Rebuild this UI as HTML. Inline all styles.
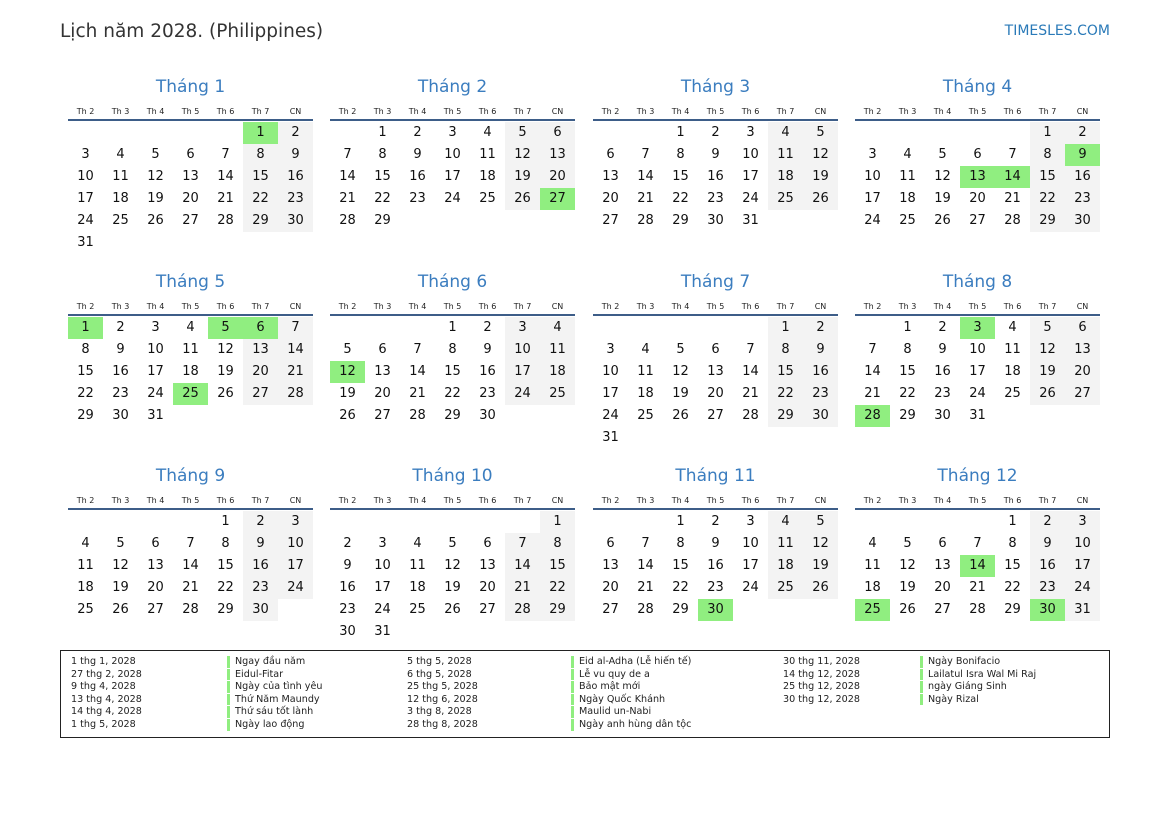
<!DOCTYPE html>
<html><head><meta charset="utf-8"><style>
*{margin:0;padding:0;box-sizing:border-box}
body{width:1169px;height:827px;background:#fff;position:relative;font-family:"DejaVu Sans","Liberation Sans",sans-serif;color:#111;overflow:hidden}
.hd{position:absolute;left:60px;top:21px;font-size:18.5px;color:#333}
.lg{position:absolute;right:59px;top:23px;font-size:14px;color:#2a7ab8}
.m{position:absolute;width:245px}
.t{height:24px;line-height:24px;text-align:center;color:#3b7dbf;font-size:17px}
.h{margin-top:4px;height:18px;display:flex;border-bottom:2px solid #3d5d88}
.h span{width:35px;text-align:center;font-size:8px;line-height:18px;color:#222}
.d{display:flex;flex-wrap:wrap;margin-top:1px}
.d i,.d b,.d s,.d u{width:35px;height:22px;line-height:22px;text-align:center;font-size:13px;font-style:normal;font-weight:normal;text-decoration:none}
.d s{background:#f3f3f3}
.d u{background:#90ee80}
.box{position:absolute;left:60px;top:650px;width:1050px;height:88px;border:1px solid #222}
.c{position:absolute;top:5px;font-size:9.6px;line-height:12.6px;color:#222}
.n div{border-left:3px solid #90ee80;padding-left:5px;margin-bottom:1px;line-height:11.6px}
</style></head><body>
<div class="hd">Lịch năm 2028. (Philippines)</div>
<div class="lg">TIMESLES.COM</div>

<div class="m" style="left:68px;top:75px"><div class="t">Tháng 1</div><div class="h"><span>Th 2</span><span>Th 3</span><span>Th 4</span><span>Th 5</span><span>Th 6</span><span>Th 7</span><span>CN</span></div><div class="d"><i></i><i></i><i></i><i></i><i></i><u>1</u><s>2</s><b>3</b><b>4</b><b>5</b><b>6</b><b>7</b><s>8</s><s>9</s><b>10</b><b>11</b><b>12</b><b>13</b><b>14</b><s>15</s><s>16</s><b>17</b><b>18</b><b>19</b><b>20</b><b>21</b><s>22</s><s>23</s><b>24</b><b>25</b><b>26</b><b>27</b><b>28</b><s>29</s><s>30</s><b>31</b></div></div>

<div class="m" style="left:330px;top:75px"><div class="t">Tháng 2</div><div class="h"><span>Th 2</span><span>Th 3</span><span>Th 4</span><span>Th 5</span><span>Th 6</span><span>Th 7</span><span>CN</span></div><div class="d"><i></i><b>1</b><b>2</b><b>3</b><b>4</b><s>5</s><s>6</s><b>7</b><b>8</b><b>9</b><b>10</b><b>11</b><s>12</s><s>13</s><b>14</b><b>15</b><b>16</b><b>17</b><b>18</b><s>19</s><s>20</s><b>21</b><b>22</b><b>23</b><b>24</b><b>25</b><s>26</s><u>27</u><b>28</b><b>29</b></div></div>

<div class="m" style="left:593px;top:75px"><div class="t">Tháng 3</div><div class="h"><span>Th 2</span><span>Th 3</span><span>Th 4</span><span>Th 5</span><span>Th 6</span><span>Th 7</span><span>CN</span></div><div class="d"><i></i><i></i><b>1</b><b>2</b><b>3</b><s>4</s><s>5</s><b>6</b><b>7</b><b>8</b><b>9</b><b>10</b><s>11</s><s>12</s><b>13</b><b>14</b><b>15</b><b>16</b><b>17</b><s>18</s><s>19</s><b>20</b><b>21</b><b>22</b><b>23</b><b>24</b><s>25</s><s>26</s><b>27</b><b>28</b><b>29</b><b>30</b><b>31</b></div></div>

<div class="m" style="left:855px;top:75px"><div class="t">Tháng 4</div><div class="h"><span>Th 2</span><span>Th 3</span><span>Th 4</span><span>Th 5</span><span>Th 6</span><span>Th 7</span><span>CN</span></div><div class="d"><i></i><i></i><i></i><i></i><i></i><s>1</s><s>2</s><b>3</b><b>4</b><b>5</b><b>6</b><b>7</b><s>8</s><u>9</u><b>10</b><b>11</b><b>12</b><u>13</u><u>14</u><s>15</s><s>16</s><b>17</b><b>18</b><b>19</b><b>20</b><b>21</b><s>22</s><s>23</s><b>24</b><b>25</b><b>26</b><b>27</b><b>28</b><s>29</s><s>30</s></div></div>

<div class="m" style="left:68px;top:270px"><div class="t">Tháng 5</div><div class="h"><span>Th 2</span><span>Th 3</span><span>Th 4</span><span>Th 5</span><span>Th 6</span><span>Th 7</span><span>CN</span></div><div class="d"><u>1</u><b>2</b><b>3</b><b>4</b><u>5</u><u>6</u><s>7</s><b>8</b><b>9</b><b>10</b><b>11</b><b>12</b><s>13</s><s>14</s><b>15</b><b>16</b><b>17</b><b>18</b><b>19</b><s>20</s><s>21</s><b>22</b><b>23</b><b>24</b><u>25</u><b>26</b><s>27</s><s>28</s><b>29</b><b>30</b><b>31</b></div></div>

<div class="m" style="left:330px;top:270px"><div class="t">Tháng 6</div><div class="h"><span>Th 2</span><span>Th 3</span><span>Th 4</span><span>Th 5</span><span>Th 6</span><span>Th 7</span><span>CN</span></div><div class="d"><i></i><i></i><i></i><b>1</b><b>2</b><s>3</s><s>4</s><b>5</b><b>6</b><b>7</b><b>8</b><b>9</b><s>10</s><s>11</s><u>12</u><b>13</b><b>14</b><b>15</b><b>16</b><s>17</s><s>18</s><b>19</b><b>20</b><b>21</b><b>22</b><b>23</b><s>24</s><s>25</s><b>26</b><b>27</b><b>28</b><b>29</b><b>30</b></div></div>

<div class="m" style="left:593px;top:270px"><div class="t">Tháng 7</div><div class="h"><span>Th 2</span><span>Th 3</span><span>Th 4</span><span>Th 5</span><span>Th 6</span><span>Th 7</span><span>CN</span></div><div class="d"><i></i><i></i><i></i><i></i><i></i><s>1</s><s>2</s><b>3</b><b>4</b><b>5</b><b>6</b><b>7</b><s>8</s><s>9</s><b>10</b><b>11</b><b>12</b><b>13</b><b>14</b><s>15</s><s>16</s><b>17</b><b>18</b><b>19</b><b>20</b><b>21</b><s>22</s><s>23</s><b>24</b><b>25</b><b>26</b><b>27</b><b>28</b><s>29</s><s>30</s><b>31</b></div></div>

<div class="m" style="left:855px;top:270px"><div class="t">Tháng 8</div><div class="h"><span>Th 2</span><span>Th 3</span><span>Th 4</span><span>Th 5</span><span>Th 6</span><span>Th 7</span><span>CN</span></div><div class="d"><i></i><b>1</b><b>2</b><u>3</u><b>4</b><s>5</s><s>6</s><b>7</b><b>8</b><b>9</b><b>10</b><b>11</b><s>12</s><s>13</s><b>14</b><b>15</b><b>16</b><b>17</b><b>18</b><s>19</s><s>20</s><b>21</b><b>22</b><b>23</b><b>24</b><b>25</b><s>26</s><s>27</s><u>28</u><b>29</b><b>30</b><b>31</b></div></div>

<div class="m" style="left:68px;top:464px"><div class="t">Tháng 9</div><div class="h"><span>Th 2</span><span>Th 3</span><span>Th 4</span><span>Th 5</span><span>Th 6</span><span>Th 7</span><span>CN</span></div><div class="d"><i></i><i></i><i></i><i></i><b>1</b><s>2</s><s>3</s><b>4</b><b>5</b><b>6</b><b>7</b><b>8</b><s>9</s><s>10</s><b>11</b><b>12</b><b>13</b><b>14</b><b>15</b><s>16</s><s>17</s><b>18</b><b>19</b><b>20</b><b>21</b><b>22</b><s>23</s><s>24</s><b>25</b><b>26</b><b>27</b><b>28</b><b>29</b><s>30</s></div></div>

<div class="m" style="left:330px;top:464px"><div class="t">Tháng 10</div><div class="h"><span>Th 2</span><span>Th 3</span><span>Th 4</span><span>Th 5</span><span>Th 6</span><span>Th 7</span><span>CN</span></div><div class="d"><i></i><i></i><i></i><i></i><i></i><i></i><s>1</s><b>2</b><b>3</b><b>4</b><b>5</b><b>6</b><s>7</s><s>8</s><b>9</b><b>10</b><b>11</b><b>12</b><b>13</b><s>14</s><s>15</s><b>16</b><b>17</b><b>18</b><b>19</b><b>20</b><s>21</s><s>22</s><b>23</b><b>24</b><b>25</b><b>26</b><b>27</b><s>28</s><s>29</s><b>30</b><b>31</b></div></div>

<div class="m" style="left:593px;top:464px"><div class="t">Tháng 11</div><div class="h"><span>Th 2</span><span>Th 3</span><span>Th 4</span><span>Th 5</span><span>Th 6</span><span>Th 7</span><span>CN</span></div><div class="d"><i></i><i></i><b>1</b><b>2</b><b>3</b><s>4</s><s>5</s><b>6</b><b>7</b><b>8</b><b>9</b><b>10</b><s>11</s><s>12</s><b>13</b><b>14</b><b>15</b><b>16</b><b>17</b><s>18</s><s>19</s><b>20</b><b>21</b><b>22</b><b>23</b><b>24</b><s>25</s><s>26</s><b>27</b><b>28</b><b>29</b><u>30</u></div></div>

<div class="m" style="left:855px;top:464px"><div class="t">Tháng 12</div><div class="h"><span>Th 2</span><span>Th 3</span><span>Th 4</span><span>Th 5</span><span>Th 6</span><span>Th 7</span><span>CN</span></div><div class="d"><i></i><i></i><i></i><i></i><b>1</b><s>2</s><s>3</s><b>4</b><b>5</b><b>6</b><b>7</b><b>8</b><s>9</s><s>10</s><b>11</b><b>12</b><b>13</b><u>14</u><b>15</b><s>16</s><s>17</s><b>18</b><b>19</b><b>20</b><b>21</b><b>22</b><s>23</s><s>24</s><u>25</u><b>26</b><b>27</b><b>28</b><b>29</b><u>30</u><s>31</s></div></div>

<div class="box">
<div class="c" style="left:10px"><div>1 thg 1, 2028</div><div>27 thg 2, 2028</div><div>9 thg 4, 2028</div><div>13 thg 4, 2028</div><div>14 thg 4, 2028</div><div>1 thg 5, 2028</div></div>
<div class="c n" style="left:166px"><div>Ngay đầu năm</div><div>Eidul-Fitar</div><div>Ngày của tình yêu</div><div>Thứ Năm Maundy</div><div>Thứ sáu tốt lành</div><div>Ngày lao động</div></div>
<div class="c" style="left:346px"><div>5 thg 5, 2028</div><div>6 thg 5, 2028</div><div>25 thg 5, 2028</div><div>12 thg 6, 2028</div><div>3 thg 8, 2028</div><div>28 thg 8, 2028</div></div>
<div class="c n" style="left:510px"><div>Eid al-Adha (Lễ hiến tế)</div><div>Lễ vu quy de a</div><div>Bảo mật mới</div><div>Ngày Quốc Khánh</div><div>Maulid un-Nabi</div><div>Ngày anh hùng dân tộc</div></div>
<div class="c" style="left:722px"><div>30 thg 11, 2028</div><div>14 thg 12, 2028</div><div>25 thg 12, 2028</div><div>30 thg 12, 2028</div></div>
<div class="c n" style="left:859px"><div>Ngày Bonifacio</div><div>Lailatul Isra Wal Mi Raj</div><div>ngày Giáng Sinh</div><div>Ngày Rizal</div></div>
</div>
</body></html>
